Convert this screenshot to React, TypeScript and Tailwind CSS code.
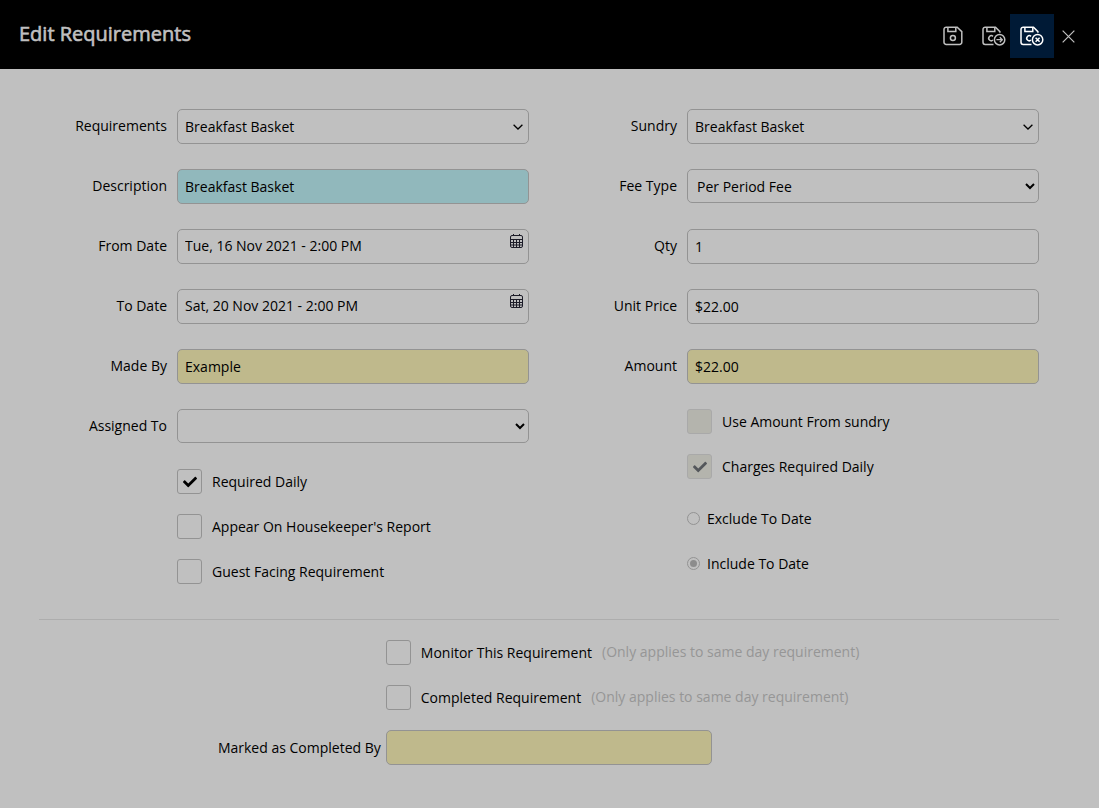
import type { ReactNode } from "react";
import { clsx } from "clsx";
import { FaCheck } from "react-icons/fa";

const inputClass =
  "h-[35px] w-full rounded-[5px] border border-[#939393] px-[7px] text-sm text-black outline-none";

type FieldProps = { id: string; label: string; children: ReactNode };

function Field({ id, label, children }: FieldProps) {
  return (
    <div className="flex h-[35px] gap-[10px]">
      <label htmlFor={id} className="w-32 shrink-0 text-right leading-[34px] whitespace-nowrap">
        {label}
      </label>
      <div className="relative min-w-0 flex-1">{children}</div>
    </div>
  );
}

type TextFieldProps = { id: string; label: string; value: string; color?: string; readOnly?: boolean };

function TextField({ id, label, value, color = "bg-transparent", readOnly }: TextFieldProps) {
  return (
    <Field id={id} label={label}>
      <input id={id} type="text" defaultValue={value} readOnly={readOnly} className={clsx(inputClass, color)} />
    </Field>
  );
}

function ComboField({ id, label, value }: TextFieldProps) {
  return (
    <Field id={id} label={label}>
      <select id={id} defaultValue={value} className={clsx(inputClass, "appearance-none bg-transparent")}>
        <option>{value}</option>
      </select>
      <svg
        viewBox="0 0 10 6"
        className="pointer-events-none absolute top-[15px] right-[6px] h-[6px] w-[10px]"
        fill="none"
        stroke="#000"
        strokeWidth="1.3"
      >
        <path d="M.6.7 5 5 9.4.7" />
      </svg>
    </Field>
  );
}

function SelectField({ id, label, value }: TextFieldProps) {
  return (
    <Field id={id} label={label}>
      <select
        id={id}
        defaultValue={value}
        className="block h-[34px] w-full rounded-[5px] border border-[#939393] bg-transparent px-[5px] text-sm text-black outline-none"
      >
        <option>{value}</option>
      </select>
    </Field>
  );
}

function DateField({ id, label, value }: TextFieldProps) {
  return (
    <Field id={id} label={label}>
      <input id={id} type="text" defaultValue={value} className={clsx(inputClass, "bg-transparent pb-[2px]")} />
      <button type="button" aria-label="Open calendar" className="absolute top-[5px] right-[6px]">
        <svg viewBox="0 0 13 14" className="h-[14px] w-[13px]" fill="none" stroke="#1c1c28" strokeWidth="1">
          <rect x=".5" y="1.5" width="12" height="12" rx="1.5" />
          <path d="M3.5 0v2M9.5 0v2M.5 5.5h12M.5 8.5h12M.5 11h12M3.5 5.5v8M6.5 5.5v8M9.5 5.5v8" />
        </svg>
      </button>
    </Field>
  );
}

type CheckProps = { label: string; checked?: boolean; disabled?: boolean };

function Check({ label, checked, disabled }: CheckProps) {
  return (
    <label className="flex h-[25px] items-center gap-[10px]">
      <span className="grid size-[25px] shrink-0 place-items-center">
        <input
          type="checkbox"
          defaultChecked={checked}
          disabled={disabled}
          className="peer col-start-1 row-start-1 size-[25px] appearance-none rounded-[3px] border border-[#939393] disabled:border-[#a9a9a9] disabled:bg-[#b4b4ad]"
        />
        <FaCheck
          size={14}
          className="pointer-events-none invisible col-start-1 row-start-1 text-black peer-checked:visible peer-disabled:text-[#54575b]"
        />
      </span>
      {label}
    </label>
  );
}

function Radio({ label, checked }: CheckProps) {
  return (
    <label className="flex h-[25px] items-center gap-[7px]">
      <span className="grid size-[13px] shrink-0 place-items-center">
        <input
          type="radio"
          name="toDate"
          defaultChecked={checked}
          disabled
          className="peer col-start-1 row-start-1 size-[13px] appearance-none rounded-full border border-[#939393]"
        />
        <span className="invisible col-start-1 row-start-1 size-[7px] rounded-full bg-[#8c8c8c] peer-checked:visible" />
      </span>
      {label}
    </label>
  );
}

function SaveIcon() {
  return (
    <svg viewBox="0 0 20 20" className="size-5" fill="none" stroke="currentColor" strokeWidth="1.5">
      <path d="M3.2 1.2h11l4.6 4.4v10.6a2.2 2.2 0 0 1-2.2 2.2H3.2A2.2 2.2 0 0 1 1 16.2V3.4a2.2 2.2 0 0 1 2.2-2.2Z" />
      <path d="M4.9 1.2v4.3h7.9V1.2" />
      <circle cx="9.9" cy="11.9" r="2.5" />
    </svg>
  );
}

// Floppy with a small round badge; children draw the badge's symbol
function SaveBadgeIcon({ children }: { children: ReactNode }) {
  return (
    <svg viewBox="0 0 24 20" className="h-5 w-6" fill="none" stroke="currentColor" strokeWidth="1.5">
      <path d="M11.5 18.4H3.2A2.2 2.2 0 0 1 1 16.2V3.4a2.2 2.2 0 0 1 2.2-2.2h10.3l4.4 4.4v1.2" />
      <path d="M4.9 1.2v4.3h7.9V1.2" />
      <path d="M11 10.4a2.5 2.5 0 1 0 0 3.6" />
      <circle cx="17.6" cy="13.7" r="5.2" />
      {children}
    </svg>
  );
}

export default function App() {
  return (
    <div className="min-h-screen bg-[#c0c0c0] font-['Open_Sans','Noto_Sans',sans-serif] text-sm text-black">
      <header className="flex h-[69px] items-start justify-between bg-black pt-[14px] pr-4 pl-[19px] text-[#c0c0c0]">
        <h1 className="text-xl leading-10 font-medium [-webkit-text-stroke:0.6px_#c0c0c0]">Edit Requirements</h1>
        <div className="flex">
          <button type="button" aria-label="Save" className="flex h-11 w-10 items-center justify-center">
            <SaveIcon />
          </button>
          <button type="button" aria-label="Save and continue" className="ml-[5px] flex h-11 w-8 items-center justify-center">
            <SaveBadgeIcon>
              <path strokeWidth="1.3" d="M14.4 13.7h5.8M17.8 11.2l2.5 2.5-2.5 2.5" />
            </SaveBadgeIcon>
          </button>
          <button
            type="button"
            aria-label="Save and close"
            className="flex size-11 items-center justify-center bg-[#001a36] text-white"
          >
            <SaveBadgeIcon>
              <path d="m15.6 11.7 4 4M19.6 11.7l-4 4" />
            </SaveBadgeIcon>
          </button>
          <button type="button" aria-label="Close" className="flex h-11 w-[29px] items-center justify-center">
            <svg viewBox="0 0 14 14" className="size-[13px]" stroke="currentColor" strokeWidth="1.3">
              <path d="m.7.7 12.6 12.6M13.3.7.7 13.3" />
            </svg>
          </button>
        </div>
      </header>

      <form className="pt-10 pr-10 pb-10 pl-[39px]">
        <div className="grid grid-cols-2">
          <div className="flex flex-col gap-[25px] pr-5">
            <ComboField id="requirements" label="Requirements" value="Breakfast Basket" />
            <TextField id="description" label="Description" value="Breakfast Basket" color="bg-[#91b8bc]" />
            <DateField id="from" label="From Date" value="Tue, 16 Nov 2021 - 2:00 PM" />
            <DateField id="to" label="To Date" value="Sat, 20 Nov 2021 - 2:00 PM" />
            <TextField id="madeBy" label="Made By" value="Example" color="bg-[#bfb98c]" readOnly />
            <SelectField id="assigned" label="Assigned To" value="" />
            <div className="ml-[138px] flex flex-col gap-5">
              <Check label="Required Daily" checked />
              <Check label="Appear On Housekeeper's Report" />
              <Check label="Guest Facing Requirement" />
            </div>
          </div>

          <div className="flex flex-col gap-[25px] pr-5">
            <ComboField id="sundry" label="Sundry" value="Breakfast Basket" />
            <SelectField id="feeType" label="Fee Type" value="Per Period Fee" />
            <TextField id="qty" label="Qty" value="1" />
            <TextField id="unitPrice" label="Unit Price" value="$22.00" />
            <TextField id="amount" label="Amount" value="$22.00" color="bg-[#bfb98c]" readOnly />
            <div className="ml-[138px] flex flex-col gap-5">
              <Check label="Use Amount From sundry" disabled />
              <Check label="Charges Required Daily" checked disabled />
              <div className="flex flex-col gap-5 pt-[7px]">
                <Radio label="Exclude To Date" />
                <Radio label="Include To Date" checked />
              </div>
            </div>
          </div>
        </div>

        <div className="mt-[35px] flex flex-col gap-5 border-t border-[#adadad] pt-5">
          <div className="ml-[34%] flex gap-[10px]">
            <Check label="Monitor This Requirement" />
            <span className="leading-6 text-[#969696]">(Only applies to same day requirement)</span>
          </div>
          <div className="ml-[34%] flex gap-[10px]">
            <Check label="Completed Requirement" />
            <span className="leading-6 text-[#969696]">(Only applies to same day requirement)</span>
          </div>
          <div className="flex">
            <label htmlFor="completedBy" className="w-[34%] pr-[5px] text-right leading-9">
              Marked as Completed By
            </label>
            <div className="w-[32%]">
              <input id="completedBy" type="text" readOnly className={clsx(inputClass, "block bg-[#bfb98c]")} />
            </div>
          </div>
        </div>
      </form>
    </div>
  );
}
